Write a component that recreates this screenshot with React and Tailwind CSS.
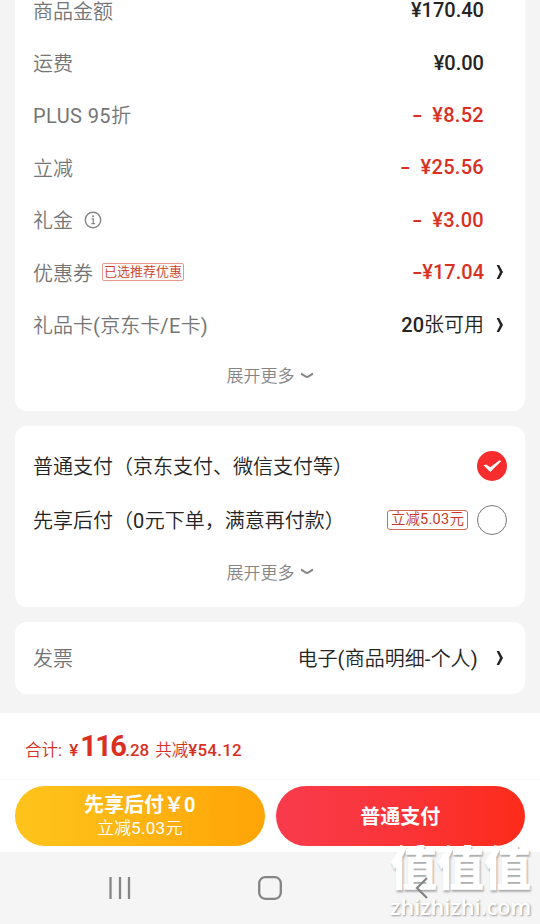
const RED = "text-[#d9301f]";

const PRICE_ROWS = [
  { label: "商品金额", value: "¥170.40" },
  { label: "运费", value: "¥0.00" },
  { label: "PLUS 95折", value: "¥8.52", minus: true },
  { label: "立减", value: "¥25.56", minus: true },
  { label: "礼金", value: "¥3.00", minus: true, info: true },
];

// Latin letters and digits are set one step heavier than the Chinese around them
function Mixed({ children, className }) {
  return (
    <span className={className}>
      {children.split(/([ -~]+)/).map((part, i) =>
        i % 2 ? (
          <span key={i} className="font-normal tracking-[0.02em]">
            {part}
          </span>
        ) : (
          part
        )
      )}
    </span>
  );
}

function InfoIcon() {
  return (
    <svg className="ml-[11px] size-[18px] text-[#858585]" viewBox="0 0 18 18" fill="none" stroke="currentColor">
      <circle cx="9" cy="9" r="7.7" strokeWidth="1.4" />
      <path d="M7.5 7.800h1.800v4.700M7.300 12.700h3.800" strokeWidth="1.2" />
      <circle cx="9" cy="5.2" r="1" fill="currentColor" stroke="none" />
    </svg>
  );
}

function ChevronRight() {
  return (
    <svg className="ml-3 h-4 w-2" viewBox="0 0 8 16" fill="#242424">
      <path d="M0.6 1h2.6L7 8 3.2 15H0.6L4 8z" />
    </svg>
  );
}

function Minus() {
  return <span className="inline-block scale-x-150">-</span>;
}

function ExpandMore() {
  return (
    <div className="flex h-[50px] items-center justify-center pt-[3px] text-[17px] text-[#858585]">
      展开更多
      <svg className="mb-[3px] ml-[5px] h-2 w-[14px]" viewBox="0 0 14 8" fill="none" stroke="currentColor" strokeWidth="2">
        <path d="M1 1.7c2 .5 4 3.3 6 3.3s4-2.800 6-3.300" />
      </svg>
    </div>
  );
}

function Row({ label, extra, children }) {
  return (
    <div className="flex h-[52.4px] items-center pr-[3px] leading-5">
      <Mixed className="pt-[3px] text-[#757575]">{label}</Mixed>
      {extra}
      <div className="ml-auto flex items-center text-[#242424]">{children}</div>
    </div>
  );
}

function Card({ className, children }) {
  return <section className={`mx-[15px] rounded-xl bg-white pl-[18px] ${className}`}>{children}</section>;
}

function PriceCard() {
  return (
    <Card className="-mt-4 h-[427px] shrink-0 pr-[18px]">
      {PRICE_ROWS.map(({ label, value, minus, info }) => (
        <Row key={label} label={label} extra={info && <InfoIcon />}>
          <span className={`mr-5 flex font-medium ${minus ? `gap-[11px] tracking-[0.3px] ${RED}` : ""}`}>
            {minus && <Minus />}
            <span>{value}</span>
          </span>
        </Row>
      ))}
      <Row
        label="优惠券"
        extra={
          <span className="ml-[9px] flex h-[18px] items-center rounded-xs border border-[#e99a8c] px-px text-[13px] text-[#c93a26]">
            已选推荐优惠
          </span>
        }
      >
        <span className={`flex gap-0.5 font-medium ${RED}`}>
          <Minus />
          <span>¥17.04</span>
        </span>
        <ChevronRight />
      </Row>
      <Row label="礼品卡(京东卡/E卡)">
        <span>
          <b className="font-medium">20</b>张可用
        </span>
        <ChevronRight />
      </Row>
      <ExpandMore />
    </Card>
  );
}

function PayMethodCard() {
  return (
    <Card className="mt-[15px] h-[181px] shrink-0 pt-[13px] pr-[18px] text-[#242424]">
      <div className="flex h-[54px] items-center justify-between">
        <span className="pt-0.5">普通支付（京东支付、微信支付等）</span>
        <svg className="size-[30px]" viewBox="0 0 30 30">
          <circle cx="15" cy="15" r="15" fill="#f72c2c" />
          <path d="M6.500 14.200l2.600-.6 4.200 2.600 8.800-6.600 2.200.3-11 11z" fill="#fff" />
        </svg>
      </div>
      <div className="flex h-[54px] items-center">
        <Mixed className="pt-0.5">先享后付（0元下单，满意再付款）</Mixed>
        <span className="ml-auto flex h-5 items-center rounded-[3px] border border-[#d2695b] px-[3px] text-[14.5px] text-[#c43a2a]">
          <Mixed>立减5.03元</Mixed>
        </span>
        <span className="ml-[9px] size-[30px] rounded-full border border-[#777]" />
      </div>
      <ExpandMore />
    </Card>
  );
}

function InvoiceCard() {
  return (
    <Card className="mt-[15px] flex h-[72px] shrink-0 items-center pr-[21px]">
      <span className="pt-0.5 text-[#757575]">发票</span>
      <Mixed className="mr-1.5 ml-auto pt-0.5 text-[#242424]">电子(商品明细-个人)</Mixed>
      <ChevronRight />
    </Card>
  );
}

function CheckoutBar() {
  return (
    <footer className="mt-[19px] h-[139px] shrink-0 bg-white">
      <div className={`flex h-[67px] items-baseline border-b border-[#f7f7f7] pt-[12px] pl-[25px] text-[17px] ${RED}`}>
        <Mixed className="text-[16.5px]">合计:</Mixed>
        <span className="ml-[7px] font-medium">¥</span>
        <span className="ml-0.5 text-[29px] font-bold tracking-[-1.700px]">116</span>
        <span className="font-medium">.28</span>
        <span className="ml-1.5 text-[16.5px]">
          共减<b className="text-[17px] font-medium tracking-[0.2px]">¥54.12</b>
        </span>
      </div>
      <div className="mx-[15px] mt-[6px] flex gap-[11px] text-white">
        <button className="flex h-[60px] flex-1 flex-col items-center justify-center rounded-full bg-linear-to-r from-[#fec41b] to-[#ffa407]">
          <span className="text-[20px] leading-6 font-bold">先享后付￥0</span>
          <Mixed className="text-[17px] leading-[22px]">立减5.03元</Mixed>
        </button>
        <button className="h-[60px] flex-1 rounded-full bg-linear-to-r from-[#f83b4c] to-[#fd2b18] pt-0.5 text-[20px] font-bold">
          普通支付
        </button>
      </div>
    </footer>
  );
}

function SystemNav() {
  return (
    <nav className="relative h-[72px] shrink-0 bg-[#f5f5f5]">
      {/* Watermark */}
      <div className="absolute -top-[7px] left-[390px] whitespace-nowrap text-white">
        <div className="text-[47px] leading-[47px] font-black [text-shadow:1px_2px_2px_#aaa]">值值值</div>
        <div className="mt-[3px] font-['Open_Sans',sans-serif] text-[21.7px] leading-6 font-semibold [text-shadow:1px_1px_2px_#999]">
          zhizhizhi.com
        </div>
      </div>
      <div className="relative flex h-full items-center pl-[109px] text-[#858585]">
        <svg className="h-[22px] w-[22px]" viewBox="0 0 22 22" stroke="currentColor" strokeWidth="2.300">
          <path d="M1.500 0v22M11 0v22M20 0v22" />
        </svg>
        <svg className="ml-[127px] size-6" viewBox="0 0 24 24" fill="none" stroke="currentColor" strokeWidth="2.300">
          <rect x="1.200" y="1.200" width="21.600" height="21.600" rx="6" />
        </svg>
        <svg className="ml-[133px] h-[22px] w-[13px]" viewBox="0 0 13 22" fill="none" stroke="currentColor" strokeWidth="2.300">
          <path d="M12 1L2 11l10 10" />
        </svg>
      </div>
    </nav>
  );
}

export default function App() {
  return (
    <div className="flex h-screen w-[540px] flex-col overflow-hidden bg-[#f4f4f4] font-[Roboto,'Noto_Sans_CJK_SC',sans-serif] text-[20px] font-[350]">
      <PriceCard />
      <PayMethodCard />
      <InvoiceCard />
      <CheckoutBar />
      <SystemNav />
    </div>
  );
}
